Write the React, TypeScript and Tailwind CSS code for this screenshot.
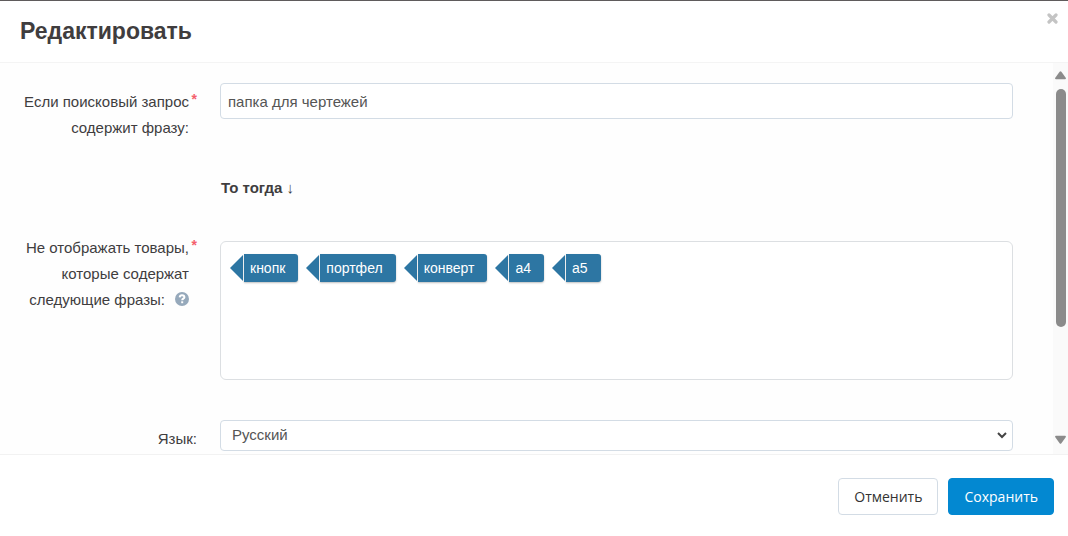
import { useState } from 'react'
import type { ReactNode } from 'react'

const phrases = ['кнопк', 'портфел', 'конверт', 'а4', 'а5']

function Required() {
  return <span className="absolute top-0 right-0 text-sm leading-5 font-bold text-[#f4606c]">*</span>
}

function Tag({ children }: { children: ReactNode }) {
  return (
    <li className="flex items-start">
      <svg width="13" height="28" viewBox="0 0 13 28" aria-hidden="true">
        <path d="M13 1v26L0 14z" fill="#2d76a3" />
      </svg>
      <span className="ml-px h-7 rounded-r-[3px] bg-[#2d76a3] pr-[13px] pl-1.5 text-sm leading-7 text-white shadow-[0_1px_2px_rgba(0,0,0,0.25)]">
        {children}
      </span>
    </li>
  )
}

function HelpIcon() {
  return (
    <svg width="14" height="14" viewBox="0 0 14 14" className="mt-[5px] ml-2.5 shrink-0" aria-hidden="true">
      <circle cx="7" cy="7" r="7" fill="#96a9bb" />
      <path d="M4.700 5.400C4.800 4 5.700 3.300 7 3.300c1.300 0 2.400.7 2.400 1.900 0 1.500-2.200 1.500-2.200 3" fill="none" stroke="#fff" strokeWidth="2" />
      <path d="M6.200 9.300h2v1.900h-2z" fill="#fff" />
    </svg>
  )
}

function Scrollbar() {
  return (
    <div className="flex w-[15px] shrink-0 flex-col items-end bg-[#fafafa] pt-2 pr-0.5 pb-2.5" aria-hidden="true">
      <svg width="11" height="9" viewBox="0 0 11 9">
        <path d="M4.600.7a1.200 1.200 0 0 1 1.800 0l4.300 6c.5.8.1 1.500-.7 1.500H1C.2 8.200-.2 7.500.3 6.700z" fill="#8b8b8b" />
      </svg>
      <div className="mt-[9px] h-[238px] w-2.5 rounded-full bg-[#8b8b8b]" />
      <svg width="11" height="9" viewBox="0 0 11 9" className="mt-auto">
        <path d="M4.600 8.300a1.200 1.200 0 0 0 1.800 0l4.300-6c.5-.8.1-1.500-.7-1.500H1C.2.8-.2 1.500.3 2.300z" fill="#8b8b8b" />
      </svg>
    </div>
  )
}

export default function App() {
  const [query, setQuery] = useState('папка для чертежей')
  const [language, setLanguage] = useState('ru')

  return (
    <div className="flex h-screen flex-col border-t border-[#5f5b5c] bg-white font-['Liberation_Sans',Arial,sans-serif] text-[15px] text-[#403d3e]">
      <header className="flex shrink-0 items-start justify-between border-b border-[#f4f4f4] pt-3 pr-2.5 pb-[13px] pl-5">
        <h1 className="text-[23px] leading-9 font-bold">Редактировать</h1>
        <button type="button" aria-label="Закрыть">
          <svg width="11" height="11" viewBox="0 0 11 11">
            <path d="M2 2l7 7M9 2l-7 7" stroke="#c4c4c4" strokeWidth="3.2" strokeLinecap="round" />
          </svg>
        </button>
      </header>

      <main className="flex min-h-0 flex-1 overflow-hidden bg-[#fefefe]">
        <form id="rule-form" className="min-w-0 flex-1 pt-5 pr-10 pl-5">
          <div className="grid grid-cols-[177px_1fr] items-start gap-x-[23px]">
            <label htmlFor="query" className="relative mt-1.5 pr-2 text-right leading-[26px]">
              Если поисковый запрос содержит фразу:
              <Required />
            </label>
            <input
              id="query"
              type="text"
              value={query}
              onChange={(e) => setQuery(e.target.value)}
              className="h-9 w-full rounded border border-[#d3dce5] bg-white px-[7px] text-[#555]"
            />
          </div>

          <p className="mt-8 ml-[201px] h-[30px] leading-[30px] font-bold">
            То тогда <span className="font-['Liberation_Serif',serif] font-normal">↓</span>
          </p>

          <div className="mt-8 grid grid-cols-[177px_1fr] items-start gap-x-[23px]">
            <div id="phrases-label" className="relative pr-2 text-right leading-[26px]">
              Не отображать товары, которые содержат
              <span className="flex justify-end">
                следующие фразы:
                <HelpIcon />
              </span>
              <Required />
            </div>
            <ul
              aria-labelledby="phrases-label"
              className="mt-1.5 flex min-h-[139px] flex-wrap content-start gap-2 rounded-md border border-[#dcdfe2] bg-white px-[9px] pt-3"
            >
              {phrases.map((phrase) => (
                <Tag key={phrase}>{phrase}</Tag>
              ))}
            </ul>
          </div>

          <div className="mt-10 grid grid-cols-[177px_1fr] items-start gap-x-[23px]">
            <label htmlFor="language" className="mt-1.5 text-right leading-[26px]">
              Язык:
            </label>
            <div className="relative">
              <select
                id="language"
                value={language}
                onChange={(e) => setLanguage(e.target.value)}
                className="h-[31px] w-full appearance-none rounded border border-[#d3dce5] bg-white pl-[11px] text-[#555]"
              >
                <option value="ru">Русский</option>
              </select>
              <svg width="10" height="7" viewBox="0 0 10 7" className="pointer-events-none absolute top-3 right-1.5" aria-hidden="true">
                <path d="M1 1l4 4 4-4" fill="none" stroke="#444" strokeWidth="2" />
              </svg>
            </div>
          </div>
        </form>
        <Scrollbar />
      </main>

      <footer className="flex shrink-0 justify-end gap-2.5 border-t border-[#f2f2f2] px-3.5 pt-[23px] pb-[21px] font-['Open_Sans',sans-serif] text-sm">
        <button type="button" className="h-[37px] rounded border border-[#d3dce5] bg-white px-[15px] text-[#333]">
          Отменить
        </button>
        <button type="submit" form="rule-form" className="h-[37px] rounded border border-[#0388d1] bg-[#0388d1] px-[15px] text-white">
          Сохранить
        </button>
      </footer>
    </div>
  )
}
